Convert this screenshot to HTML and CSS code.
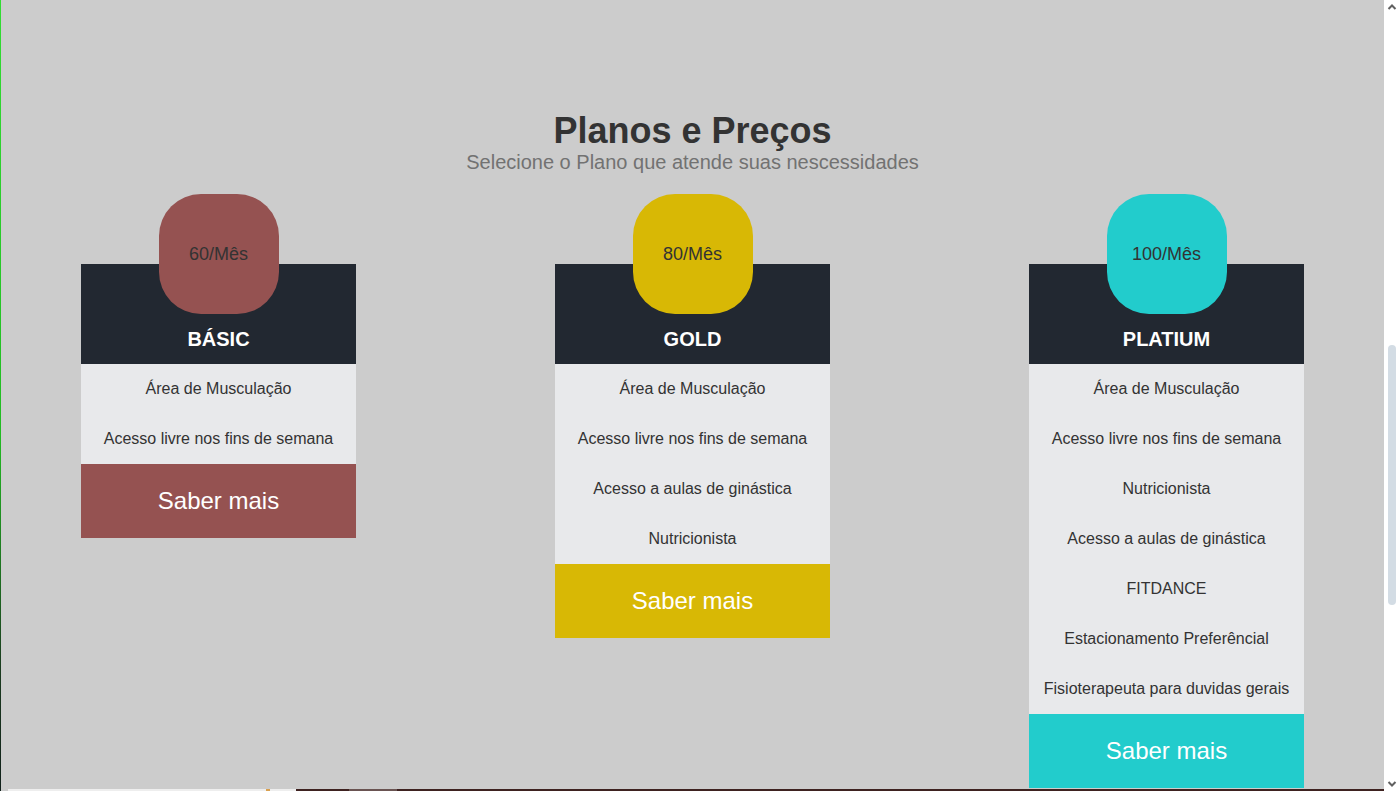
FILE: index.html
```html
<!DOCTYPE html>
<html lang="pt-BR">
<head>
<meta charset="utf-8">
<title>Planos e Preços</title>
<link rel="stylesheet" href="styles.css">
</head>
<body>
<div class="window">
  <div class="edge"></div>
  <div class="viewport">
    <section class="pricing">
      <h1 class="title">Planos e Preços</h1>
      <p class="subtitle">Selecione o Plano que atende suas nescessidades</p>
      <div class="plans">
        <div class="plan plan-basic">
          <div class="badge">60/Mês</div>
          <div class="plan-head">BÁSIC</div>
          <ul class="features">
            <li>Área de Musculação</li>
            <li>Acesso livre nos fins de semana</li>
          </ul>
          <a class="cta" href="#">Saber mais</a>
        </div>
        <div class="plan plan-gold">
          <div class="badge">80/Mês</div>
          <div class="plan-head">GOLD</div>
          <ul class="features">
            <li>Área de Musculação</li>
            <li>Acesso livre nos fins de semana</li>
            <li>Acesso a aulas de ginástica</li>
            <li>Nutricionista</li>
          </ul>
          <a class="cta" href="#">Saber mais</a>
        </div>
        <div class="plan plan-platinum">
          <div class="badge">100/Mês</div>
          <div class="plan-head">PLATIUM</div>
          <ul class="features">
            <li>Área de Musculação</li>
            <li>Acesso livre nos fins de semana</li>
            <li>Nutricionista</li>
            <li>Acesso a aulas de ginástica</li>
            <li>FITDANCE</li>
            <li>Estacionamento Preferêncial</li>
            <li>Fisioterapeuta para duvidas gerais</li>
          </ul>
          <a class="cta" href="#">Saber mais</a>
        </div>
      </div>
    </section>
    <div class="next-strip">
      <span class="ns-white"><span class="ns-dot"></span></span>
      <span class="ns-dark"></span>
      <span class="ns-mid"></span>
      <span class="ns-dark ns-fill"></span>
    </div>
  </div>
  <div class="scrollbar">
    <svg class="arrow" width="16" height="14" viewBox="0 0 16 14"><path d="M4.5 9 L8 5.5 L11.5 9" fill="none" stroke="#606060" stroke-width="2"/></svg>
    <div class="track"><div class="thumb"></div></div>
    <svg class="arrow" width="16" height="14" viewBox="0 0 16 14"><path d="M4.5 5 L8 8.5 L11.5 5" fill="none" stroke="#606060" stroke-width="2"/></svg>
  </div>
</div>
</body>
</html>
```

FILE: styles.css
```css
* { box-sizing: border-box; }
html, body { margin: 0; padding: 0; height: 100%; overflow: hidden; }
body {
  font-family: "Liberation Sans", Arial, sans-serif;
  background: #cccccc;
  color: #333333;
}
.window {
  display: flex;
  width: 1400px;
  height: 791px;
}
.edge {
  width: 1px;
  flex: none;
  background: linear-gradient(to bottom, #33dd33 0%, #22bb22 55%, #1b3a1f 85%, #10201a 100%);
}
.viewport {
  flex: 1;
  display: flex;
  flex-direction: column;
  min-width: 0;
}
.pricing {
  height: 789px;
  flex: none;
  padding-top: 110px;
  overflow: hidden;
  text-align: center;
  background: #cccccc;
}
.title {
  margin: 0;
  font-size: 36px;
  line-height: 41px;
  font-weight: 700;
  color: #333333;
}
.subtitle {
  margin: 0;
  font-size: 20px;
  line-height: 23px;
  color: #727272;
}
.plans {
  display: flex;
  justify-content: center;
  align-items: flex-start;
  gap: 199px;
  margin-top: 20px;
}
.plan {
  width: 275px;
  display: flex;
  flex-direction: column;
  align-items: center;
}
.badge {
  position: relative;
  z-index: 1;
  width: 120px;
  height: 120px;
  border-radius: 42px;
  display: flex;
  align-items: center;
  justify-content: center;
  font-size: 18px;
  color: #333333;
  margin-bottom: -50px;
}
.plan-head {
  width: 100%;
  background: #222831;
  color: #ffffff;
  font-weight: 700;
  font-size: 20px;
  line-height: 50px;
  padding-top: 50px;
}
.features {
  width: 100%;
  margin: 0;
  padding: 0;
  list-style: none;
  background: #e8e9eb;
}
.features li {
  height: 50px;
  line-height: 50px;
  font-size: 16px;
  color: #333333;
}
.cta {
  width: 100%;
  height: 74px;
  line-height: 74px;
  font-size: 24px;
  color: #ffffff;
  text-decoration: none;
}
.plan-basic .badge, .plan-basic .cta { background: #955251; }
.plan-gold .badge, .plan-gold .cta { background: #d8b805; }
.plan-platinum .badge, .plan-platinum .cta { background: #22cccc; }

.next-strip {
  height: 2px;
  flex: none;
  display: flex;
}
.ns-white {
  width: 288px;
  margin-left: 7px;
  background: #eeeeee;
  position: relative;
}
.ns-dot {
  position: absolute;
  left: 258px;
  top: 0;
  width: 4px;
  height: 2px;
  background: #d9a050;
}
.ns-dark { width: 53px; background: #3e2220; }
.ns-mid { width: 48px; background: #6a5452; }
.ns-fill { flex: 1; }

.scrollbar {
  width: 16px;
  flex: none;
  background: #ffffff;
  display: flex;
  flex-direction: column;
  align-items: center;
  padding: 0;
}
.arrow { flex: none; display: block; }
.track {
  flex: 1;
  width: 100%;
  padding-top: 331px;
  display: flex;
  justify-content: center;
}
.thumb {
  width: 8px;
  height: 260px;
  border-radius: 4px;
  background: #d3dce4;
}
```
